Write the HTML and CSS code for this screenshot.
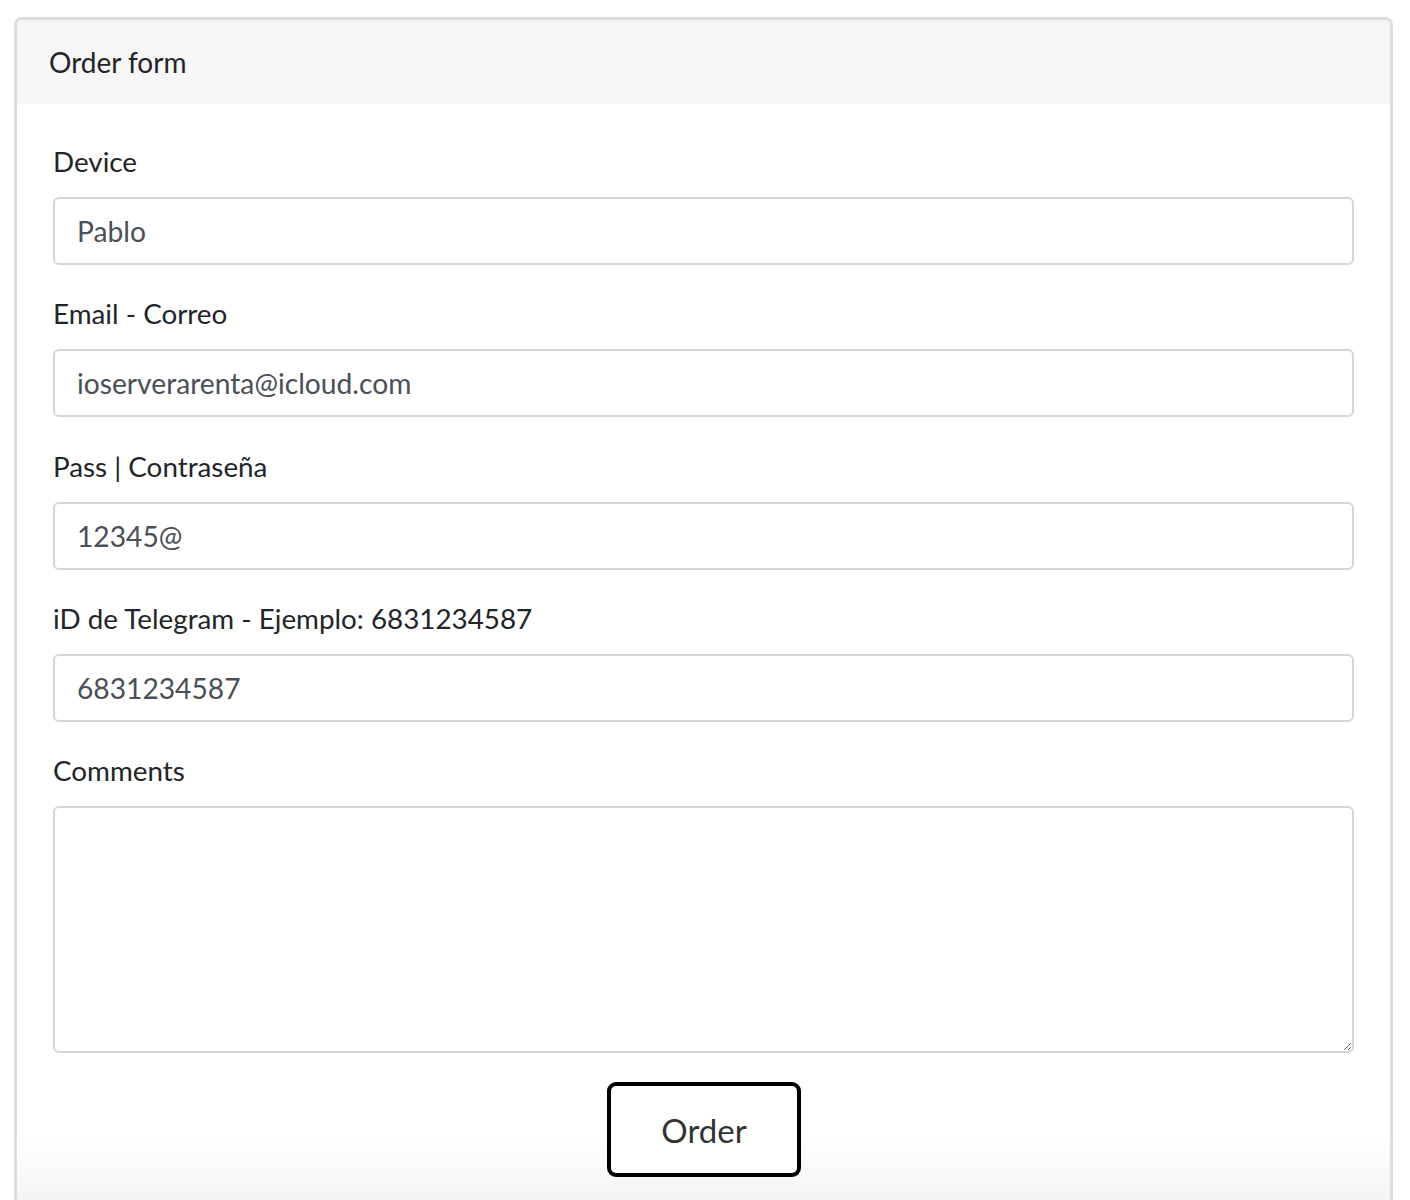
FILE: index.html
```html
<!DOCTYPE html>
<html>
<head>
<meta charset="utf-8">
<link rel="stylesheet" href="styles.css">
</head>
<body>
<div class="card">
  <div class="card-header">Order form</div>
  <div class="card-body">
    <form>
      <div class="group">
        <label>Device</label>
        <input class="control" type="text" value="Pablo">
      </div>
      <div class="group">
        <label>Email - Correo</label>
        <input class="control" type="text" value="ioserverarenta@icloud.com">
      </div>
      <div class="group">
        <label>Pass | Contraseña</label>
        <input class="control" type="text" value="12345@">
      </div>
      <div class="group">
        <label>iD de Telegram - Ejemplo: 6831234587</label>
        <input class="control" type="text" value="6831234587">
      </div>
      <div class="group">
        <label>Comments</label>
        <textarea class="control area"></textarea>
      </div>
      <div class="actions">
        <button type="button" class="btn">Order</button>
      </div>
    </form>
  </div>
</div>
</body>
</html>
```
FILE: styles.css
```css
html, body {
  margin: 0;
  padding: 0;
  background: #fff;
}
body {
  font-family: Lato, "Open Sans", sans-serif;
  color: #212529;
  padding: 17px 17px 0 14px;
}
.card {
  border: 3px solid #dedede;
  border-bottom: none;
  border-radius: 8px 8px 0 0;
  overflow: hidden;
}
.card-header {
  background: #f6f6f6;
  height: 84px;
  box-sizing: border-box;
  padding-left: 32px;
  font-size: 28px;
  line-height: 84px;
  color: #212529;
}
.card-body {
  padding: 38px 36px 40px 36px;
  background: linear-gradient(to bottom, #fff 0, #fff 1030px, #f4f4f4 1100px, #f1f1f1 1200px);
}
.group {
  margin-bottom: 29.3px;
}
label {
  display: block;
  font-size: 27.8px;
  line-height: 39px;
  margin-bottom: 16px;
  color: #212529;
}
.control {
  display: block;
  box-sizing: border-box;
  width: 100%;
  height: 68px;
  border: 2px solid #d4d6d9;
  border-radius: 6px;
  padding: 0 22px;
  font-family: Lato, "Open Sans", sans-serif;
  font-size: 28.2px;
  color: #495057;
  background: #fff;
  outline: none;
}
.area {
  height: 247px;
  resize: vertical;
}
.group:last-of-type {
  margin-bottom: 31px;
}
.actions {
  display: flex;
  justify-content: center;
}
.btn {
  width: 194px;
  height: 95px;
  border: 4px solid #000;
  border-radius: 9px;
  background: #fff;
  font-family: Lato, "Open Sans", sans-serif;
  font-size: 33px;
  color: #333;
  margin-left: 1px;
}
```
